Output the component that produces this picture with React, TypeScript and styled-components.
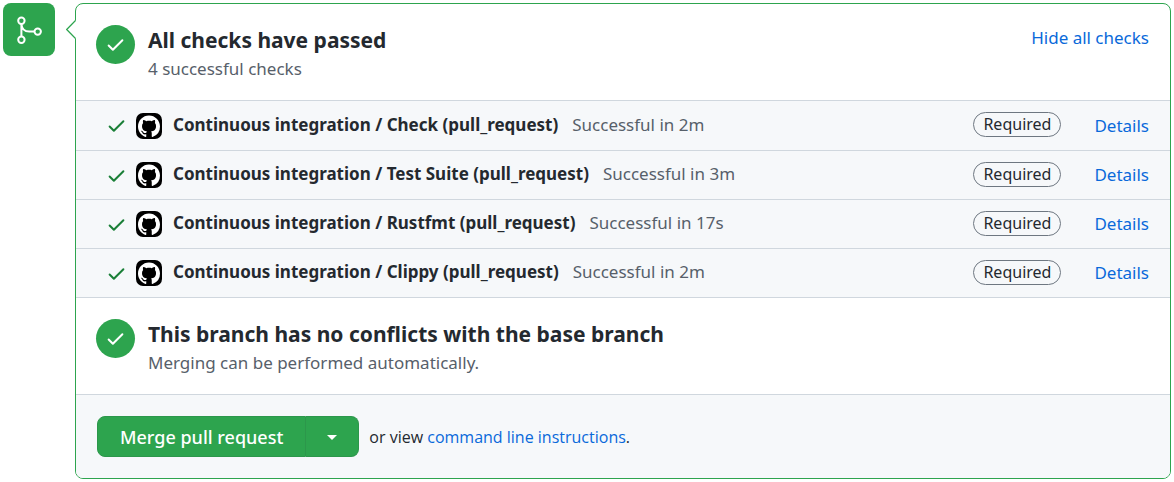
import React from "react";
import styled, { createGlobalStyle } from "styled-components";

const GlobalStyle = createGlobalStyle`
  *, *::before, *::after { box-sizing: border-box; }
  body {
    margin: 0;
    background: #ffffff;
    color: #24292f;
    font-family: "Noto Sans", sans-serif;
    font-size: 17px;
    line-height: 24px;
  }
`;

const Page = styled.main`
  display: flex;
  align-items: flex-start;
  gap: 20px;
  padding: 3px;
`;

const BranchBadge = styled.div`
  display: flex;
  flex: none;
  align-items: center;
  justify-content: center;
  width: 52px;
  height: 53px;
  border-radius: 8px;
  background: #2da44e;
`;

const Panel = styled.section`
  position: relative;
  flex: 1;
  min-width: 0;
  border: 1px solid #2da44e;
  border-radius: 8px;
`;

const Pointer = styled.svg`
  position: absolute;
  top: 16px;
  left: -10px;
`;

const Summary = styled.header`
  display: flex;
  align-items: flex-start;
  gap: 13px;
  padding: 21px 21px 18px 20px;
  border-bottom: 1px solid #d0d7de;
`;

const StatusCircle = styled.span`
  display: flex;
  flex: none;
  align-items: center;
  justify-content: center;
  width: 39px;
  height: 39px;
  border-radius: 50%;
  background: #2da44e;
`;

const SummaryText = styled.div`
  flex: 1;
`;

const Title = styled.h3`
  margin: 0;
  font-size: 21px;
  font-weight: 700;
  line-height: 30px;
`;

const Subtitle = styled.p`
  margin: 0;
  color: #57606a;
  line-height: 27px;
`;

const Link = styled.a`
  color: #0969da;
  text-decoration: none;
`;

const ToggleButton = styled.button`
  padding: 0;
  border: 0;
  background: none;
  color: #0969da;
  font: inherit;
  line-height: 26px;
`;

const CheckList = styled.ul`
  margin: 0;
  padding: 0;
  list-style: none;
  background: #f6f8fa;
`;

const CheckRow = styled.li`
  display: flex;
  align-items: center;
  height: 49px;
  padding: 0 21px 0 30px;
  border-bottom: 1px solid #d0d7de;

  &:first-child { height: 50px; }
`;

const Avatar = styled.svg`
  flex: none;
  margin: 0 11px 0 9px;
`;

const CheckInfo = styled.div`
  display: flex;
  flex: 1;
  align-items: center;
  padding-bottom: 2px;
`;

const CheckName = styled.strong`
  font-weight: 700;
`;

const CheckResult = styled.span`
  flex: 1;
  margin-left: 14px;
  color: #57606a;
`;

const Required = styled.span`
  margin-right: 33px;
  padding: 0 9px;
  border: 1px solid #6e7781;
  border-radius: 13px;
  font-size: 16px;
  line-height: 23px;
`;

const MergeBar = styled.footer`
  display: flex;
  align-items: center;
  gap: 10px;
  padding: 21px;
  border-radius: 0 0 7px 7px;
  background: #f6f8fa;
`;

const MergeNote = styled.span`
  font-family: "Open Sans", "Noto Sans", sans-serif;
  font-size: 16px;
`;

const ButtonGroup = styled.div`
  display: flex;
`;

const MergeButton = styled.button`
  height: 41px;
  padding: 0 22px;
  border: 1px solid #2c974b;
  border-radius: 8px 0 0 8px;
  background: #2da44e;
  color: #ffffff;
  font: inherit;
  font-size: 18px;
  font-weight: 500;
`;

const MenuButton = styled(MergeButton)`
  display: flex;
  align-items: center;
  padding: 2px 21px 0;
  border-left: 0;
  border-radius: 0 8px 8px 0;
`;

const checks = [
  { name: "Check", time: "2m" },
  { name: "Test Suite", time: "3m" },
  { name: "Rustfmt", time: "17s" },
  { name: "Clippy", time: "2m" },
];

const CheckIcon = ({ color }: { color: string }) => (
  <svg width="21" height="21" viewBox="0 0 16 16" fill={color} aria-hidden="true">
    <path d="M13.78 4.22a.75.75 0 010 1.06l-7.25 7.25a.75.75 0 01-1.06 0L2.22 9.28a.75.75 0 011.06-1.06L6 10.94l6.72-6.72a.75.75 0 011.06 0z" />
  </svg>
);

const MergeIcon = () => (
  <svg width="32" height="32" viewBox="0 0 32 32" fill="none" stroke="#ffffff" strokeWidth="2" aria-hidden="true">
    <circle cx="8.4" cy="6.8" r="3.2" />
    <circle cx="8.4" cy="25.7" r="3.2" />
    <circle cx="24.7" cy="17.6" r="3.2" />
    <path d="M8.4 10v12.500M8.400 10c.4 4.800 3 7.600 7.800 7.600h5.300" />
  </svg>
);

const GitHubAvatar = () => (
  <Avatar width="26" height="26" viewBox="0 0 26 26" role="img" aria-label="GitHub Actions">
    <rect width="26" height="26" rx="7" fill="#000000" />
    <g transform="translate(2 2.500) scale(1.375)">
      <path
        fill="#ffffff"
        d="M8 0C3.580 0 0 3.580 0 8c0 3.540 2.290 6.530 5.470 7.590.4.070.55-.17.55-.38 0-.19-.01-.82-.01-1.490-2.010.37-2.530-.49-2.690-.94-.09-.23-.48-.94-.82-1.130-.28-.15-.68-.52-.01-.53.63-.01 1.080.58 1.230.82.72 1.210 1.870.87 2.330.66.07-.52.28-.87.51-1.070-1.780-.2-3.640-.89-3.640-3.950 0-.87.31-1.590.82-2.150-.08-.2-.36-1.020.08-2.120 0 0 .67-.21 2.200.82.64-.18 1.320-.27 2-.27s1.360.09 2 .27c1.530-1.040 2.200-.82 2.200-.82.44 1.100.16 1.920.08 2.120.51.56.82 1.270.82 2.150 0 3.070-1.870 3.750-3.650 3.950.29.25.54.73.54 1.480 0 1.070-.01 1.930-.01 2.200 0 .21.15.46.55.38A8.010 8.010 0 0016 8c0-4.420-3.580-8-8-8z"
      />
    </g>
  </Avatar>
);

export default function App() {
  return (
    <>
      <GlobalStyle />
      <Page>
        <BranchBadge>
          <MergeIcon />
        </BranchBadge>
        <Panel>
          <Pointer width="10" height="19" viewBox="0 0 10 19" aria-hidden="true">
            <path d="M10 .5H9.500L.7 9.500l8.800 9H10z" fill="#ffffff" />
            <path d="M9.500 .5L.7 9.500l8.800 9" fill="none" stroke="#2da44e" strokeWidth="1.200" />
          </Pointer>
          <Summary>
            <StatusCircle>
              <CheckIcon color="#ffffff" />
            </StatusCircle>
            <SummaryText>
              <Title>All checks have passed</Title>
              <Subtitle>4 successful checks</Subtitle>
            </SummaryText>
            <ToggleButton type="button">Hide all checks</ToggleButton>
          </Summary>
          <CheckList>
            {checks.map((check) => (
              <CheckRow key={check.name}>
                <CheckIcon color="#1a7f37" />
                <GitHubAvatar />
                <CheckInfo>
                  <CheckName>Continuous integration / {check.name} (pull_request)</CheckName>
                  <CheckResult>Successful in {check.time}</CheckResult>
                  <Required>Required</Required>
                </CheckInfo>
                <Link href="#details">Details</Link>
              </CheckRow>
            ))}
          </CheckList>
          <Summary>
            <StatusCircle>
              <CheckIcon color="#ffffff" />
            </StatusCircle>
            <SummaryText>
              <Title>This branch has no conflicts with the base branch</Title>
              <Subtitle>Merging can be performed automatically.</Subtitle>
            </SummaryText>
          </Summary>
          <MergeBar>
            <ButtonGroup>
              <MergeButton type="button">Merge pull request</MergeButton>
              <MenuButton type="button" aria-label="Select merge method">
                <svg width="10" height="5" viewBox="0 0 10 5" aria-hidden="true">
                  <path d="M0 0h10L5 5z" fill="#ffffff" />
                </svg>
              </MenuButton>
            </ButtonGroup>
            <MergeNote>
              or view <Link href="#command-line">command line instructions</Link>.
            </MergeNote>
          </MergeBar>
        </Panel>
      </Page>
    </>
  );
}
